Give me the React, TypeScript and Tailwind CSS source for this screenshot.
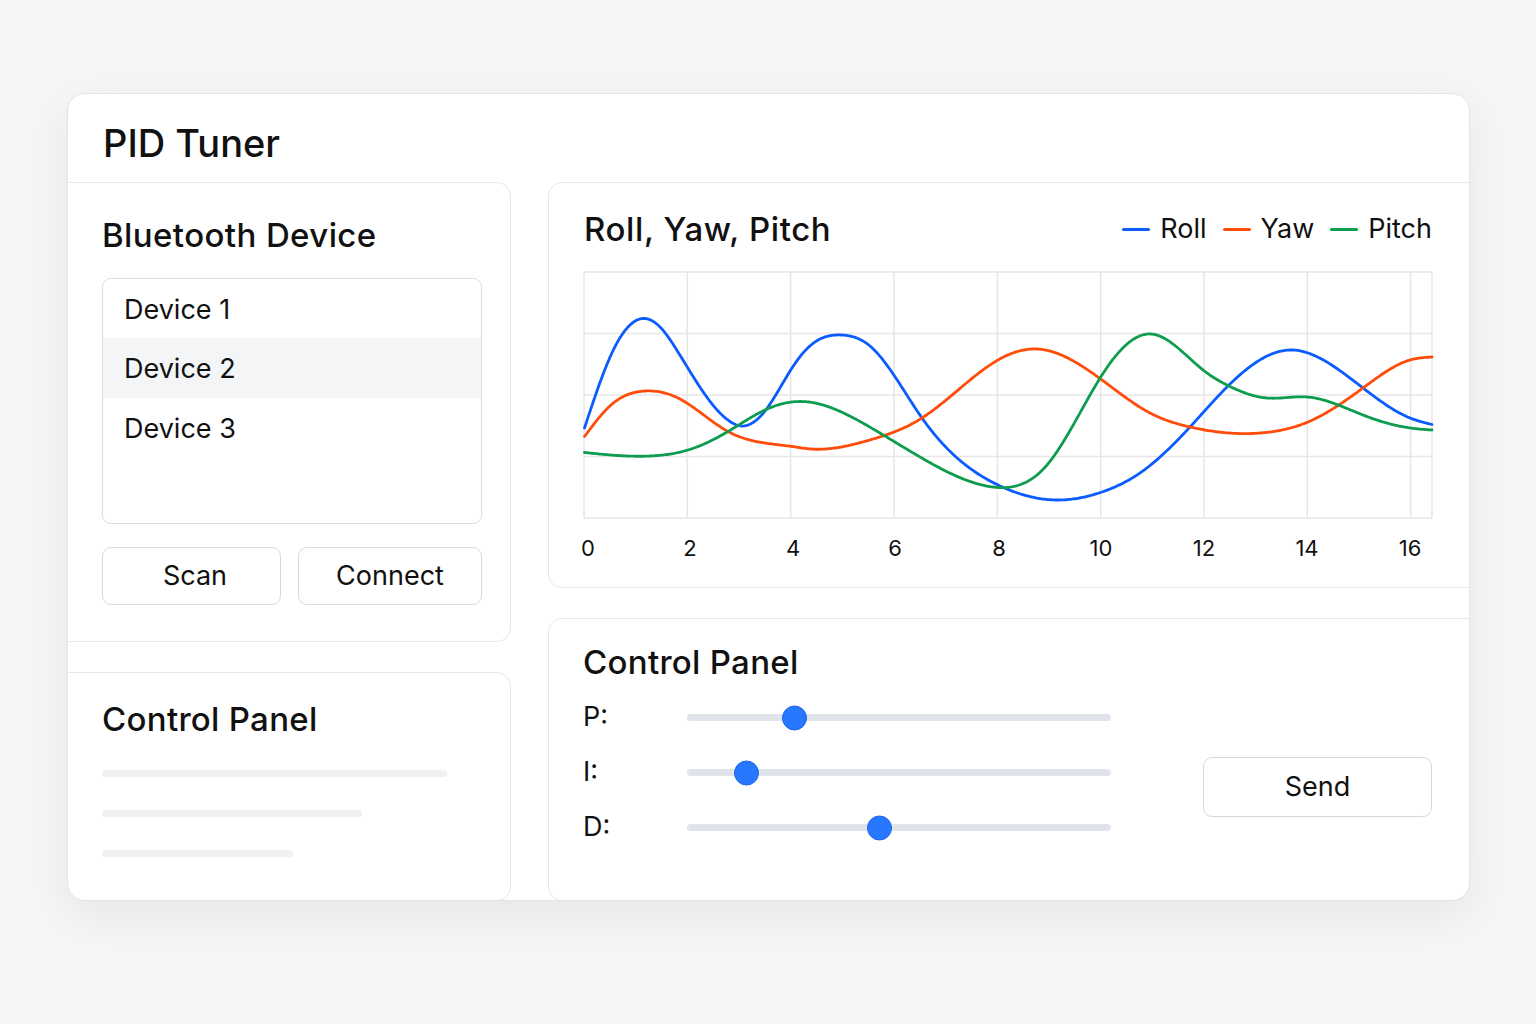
import React from "react";

type Pt = [number, number];

// natural cubic spline y(x) through the points, sampled into a polyline
function splinePath(pts: Pt[], step = 1.5): string {
  const n = pts.length;
  const xs = pts.map((p) => p[0]);
  const ys = pts.map((p) => p[1]);
  const h: number[] = [];
  for (let i = 0; i < n - 1; i++) h.push(xs[i + 1] - xs[i]);

  const M = new Array(n).fill(0);
  const cp: number[] = [];
  const rp: number[] = [];
  for (let i = 1; i < n - 1; i++) {
    const a = h[i - 1];
    const b = 2 * (h[i - 1] + h[i]);
    const c = h[i];
    const r = 6 * ((ys[i + 1] - ys[i]) / h[i] - (ys[i] - ys[i - 1]) / h[i - 1]);
    const denom = b - (i > 1 ? a * cp[i - 1] : 0);
    cp[i] = c / denom;
    rp[i] = (r - (i > 1 ? a * rp[i - 1] : 0)) / denom;
  }
  for (let i = n - 2; i >= 1; i--) {
    M[i] = rp[i] - (i < n - 2 ? cp[i] * M[i + 1] : 0);
  }

  let d = `M${xs[0]},${ys[0]}`;
  for (let i = 0; i < n - 1; i++) {
    const x0 = xs[i];
    const x1 = xs[i + 1];
    const hi = h[i];
    for (let x = x0 + step; x < x1 + step / 2; x += step) {
      const xx = Math.min(x, x1);
      const A = x1 - xx;
      const B = xx - x0;
      const y =
        (M[i] * A * A * A) / (6 * hi) +
        (M[i + 1] * B * B * B) / (6 * hi) +
        (ys[i] / hi - (M[i] * hi) / 6) * A +
        (ys[i + 1] / hi - (M[i + 1] * hi) / 6) * B;
      d += ` L${xx.toFixed(2)},${y.toFixed(2)}`;
    }
  }
  return d;
}

const roll: Pt[] = [
  [584.5, 428], [611, 355], [628, 327], [643, 318.5], [661, 328], [678, 352],
  [718, 411], [730, 421.5], [741, 426], [753, 422.5], [765, 411], [792, 368],
  [811, 345], [841.5, 335], [870, 346], [922, 418], [998, 485], [1060, 500],
  [1102, 492], [1140, 473], [1190, 427], [1227, 387], [1293, 350], [1308, 353],
  [1363, 388], [1410, 418], [1432, 424.5],
];

const yaw: Pt[] = [
  [584.5, 436.5], [611, 405], [645, 391], [678, 398], [728, 431.5], [792, 446.5],
  [811, 449], [868, 440.5], [922, 418], [998, 360], [1037, 349], [1102, 380],
  [1150, 413], [1190, 427], [1270, 432], [1308, 422], [1363, 388], [1410, 360],
  [1432, 357],
];

const pitch: Pt[] = [
  [584.5, 452.5], [658, 455.5], [688, 450], [728, 431.5], [765, 410], [801, 401.5],
  [868, 426], [927, 461], [993, 487], [1047, 465], [1102, 375], [1151, 334],
  [1205, 371.5], [1227, 385], [1267, 398], [1307, 397], [1363, 415], [1410, 428],
  [1432, 430],
];

const series = [
  { name: "Roll", color: "#0b5cff", pts: roll },
  { name: "Yaw", color: "#ff4c0b", pts: yaw },
  { name: "Pitch", color: "#0e9c4e", pts: pitch },
];

const gridX = [584, 687.3, 790.7, 894, 997.3, 1100.7, 1204, 1307.3, 1410.7, 1432];
const gridY = [272, 333.5, 395, 456.5, 518];
const ticks: [string, number][] = [
  ["0", 588], ["2", 690], ["4", 793], ["6", 895], ["8", 999],
  ["10", 1101], ["12", 1204], ["14", 1307], ["16", 1410],
];

const gains = [
  { label: "P:", value: 0.2535 },
  { label: "I:", value: 0.14 },
  { label: "D:", value: 0.455 },
];

function Chart() {
  return (
    <svg
      width={866}
      height={300}
      viewBox="576 264 866 300"
      className="block -ml-[8px] mt-[15px] overflow-visible"
    >
      {gridY.map((y) => (
        <line key={`h${y}`} x1={584} x2={1432} y1={y} y2={y} stroke="#e6e6e9" strokeWidth={1.5} />
      ))}
      {gridX.map((x) => (
        <line key={`v${x}`} x1={x} x2={x} y1={272} y2={518} stroke="#e6e6e9" strokeWidth={1.5} />
      ))}
      {series.map((s) => (
        <path
          key={s.name}
          d={splinePath(s.pts)}
          fill="none"
          stroke={s.color}
          strokeWidth={2.8}
          strokeLinecap="round"
          strokeLinejoin="round"
        />
      ))}
      {ticks.map(([t, x]) => (
        <text key={t} x={x} y={556} textAnchor="middle" fontSize={22} fill="#111111">
          {t}
        </text>
      ))}
    </svg>
  );
}

function Slider({ value }: { value: number }) {
  return (
    <div className="relative h-[7px] w-[424px] rounded-full bg-[#dfe3ea]">
      <div
        className="absolute top-1/2 h-[25px] w-[25px] -translate-y-1/2 rounded-full border border-[#1c63ea] bg-[#2778ff]"
        style={{ left: `calc(${value * 100}% - 12.5px)` }}
      />
    </div>
  );
}

export default function App() {
  return (
    <div className="min-h-screen w-full bg-[#f6f6f6] font-['Inter',sans-serif] text-[#111111]">
      <div className="pl-[67px] pt-[93px] pb-[120px]">
        <div className="flex h-[808px] w-[1403px] flex-col overflow-hidden rounded-[18px] border border-[#e4e4e7] bg-white shadow-[0_14px_50px_rgba(0,0,0,0.07)]">
          <header className="h-[88px] shrink-0 pl-[35px] pt-[26px]">
            <h1 className="text-[38px] font-medium leading-[46px]">PID Tuner</h1>
          </header>

          <div className="-mx-px -mb-px flex flex-1 gap-[37px]">
            {/* left column */}
            <div className="flex w-[444px] shrink-0 flex-col gap-[30px]">
              <section className="h-[460px] rounded-r-[14px] border border-[#e6e6e9] pl-[34px] pt-[32px]">
                <h2 className="text-[33px] font-medium leading-[40px] tracking-[0.4px]">Bluetooth Device</h2>
                <div className="mt-[23px] h-[246px] w-[380px] overflow-hidden rounded-[9px] border border-[#dcdde1]">
                  <div className="flex h-[59px] items-center pl-[21px] pt-[3px] text-[27px]">Device 1</div>
                  <div className="flex h-[60px] items-center bg-[#f4f5f7] pl-[21px] pt-[3px] text-[27px]">Device 2</div>
                  <div className="flex h-[60px] items-center pl-[21px] pt-[2px] text-[27px]">Device 3</div>
                </div>
                <div className="mt-[23px] flex gap-[17px]">
                  <button className="h-[58px] w-[179px] rounded-[9px] border border-[#d9dadf] bg-white pl-[7px] text-[27px]">
                    Scan
                  </button>
                  <button className="h-[58px] w-[184px] rounded-[9px] border border-[#d9dadf] bg-white text-[27px]">
                    Connect
                  </button>
                </div>
              </section>

              <section className="flex-1 rounded-r-[14px] border border-[#e6e6e9] pl-[34px] pt-[26px]">
                <h2 className="text-[33px] font-medium leading-[40px] tracking-[0.3px]">Control Panel</h2>
                <div className="mt-[31px] h-[7px] w-[345px] rounded-full bg-[#f0f1f3]" />
                <div className="mt-[33px] h-[7px] w-[260px] rounded-full bg-[#f0f1f3]" />
                <div className="mt-[33px] h-[7px] w-[191px] rounded-full bg-[#f0f1f3]" />
              </section>
            </div>

            {/* right column */}
            <div className="flex min-w-0 flex-1 flex-col gap-[30px]">
              <section className="h-[406px] rounded-l-[14px] border border-[#e6e6e9] pl-[35px] pr-[37px] pt-[26px]">
                <div className="flex h-[40px] items-center justify-between">
                  <h2 className="text-[33px] font-medium leading-[40px] tracking-[0.6px]">Roll, Yaw, Pitch</h2>
                  <div className="flex items-center gap-[16px] text-[27px]">
                    {series.map((s) => (
                      <div key={s.name} className="flex items-center gap-[10px]">
                        <span className="h-[3px] w-[28px] rounded-full" style={{ backgroundColor: s.color }} />
                        <span>{s.name}</span>
                      </div>
                    ))}
                  </div>
                </div>
                <Chart />
              </section>

              <section className="flex-1 rounded-l-[14px] border border-[#e6e6e9] pl-[34px] pr-[37px] pt-[23px]">
                <h2 className="text-[33px] font-medium leading-[40px] tracking-[0.3px]">Control Panel</h2>
                <div className="flex">
                  <div className="mt-[8px] flex flex-col">
                    {gains.map((g) => (
                      <div key={g.label} className="flex h-[55px] items-center">
                        <span className="w-[104px] text-[27px]">{g.label}</span>
                        <Slider value={g.value} />
                      </div>
                    ))}
                  </div>
                  <button className="ml-auto mt-[75px] h-[60px] w-[229px] rounded-[9px] border border-[#d6d8dc] bg-white text-[27px]">
                    Send
                  </button>
                </div>
              </section>
            </div>
          </div>
        </div>
      </div>
    </div>
  );
}
